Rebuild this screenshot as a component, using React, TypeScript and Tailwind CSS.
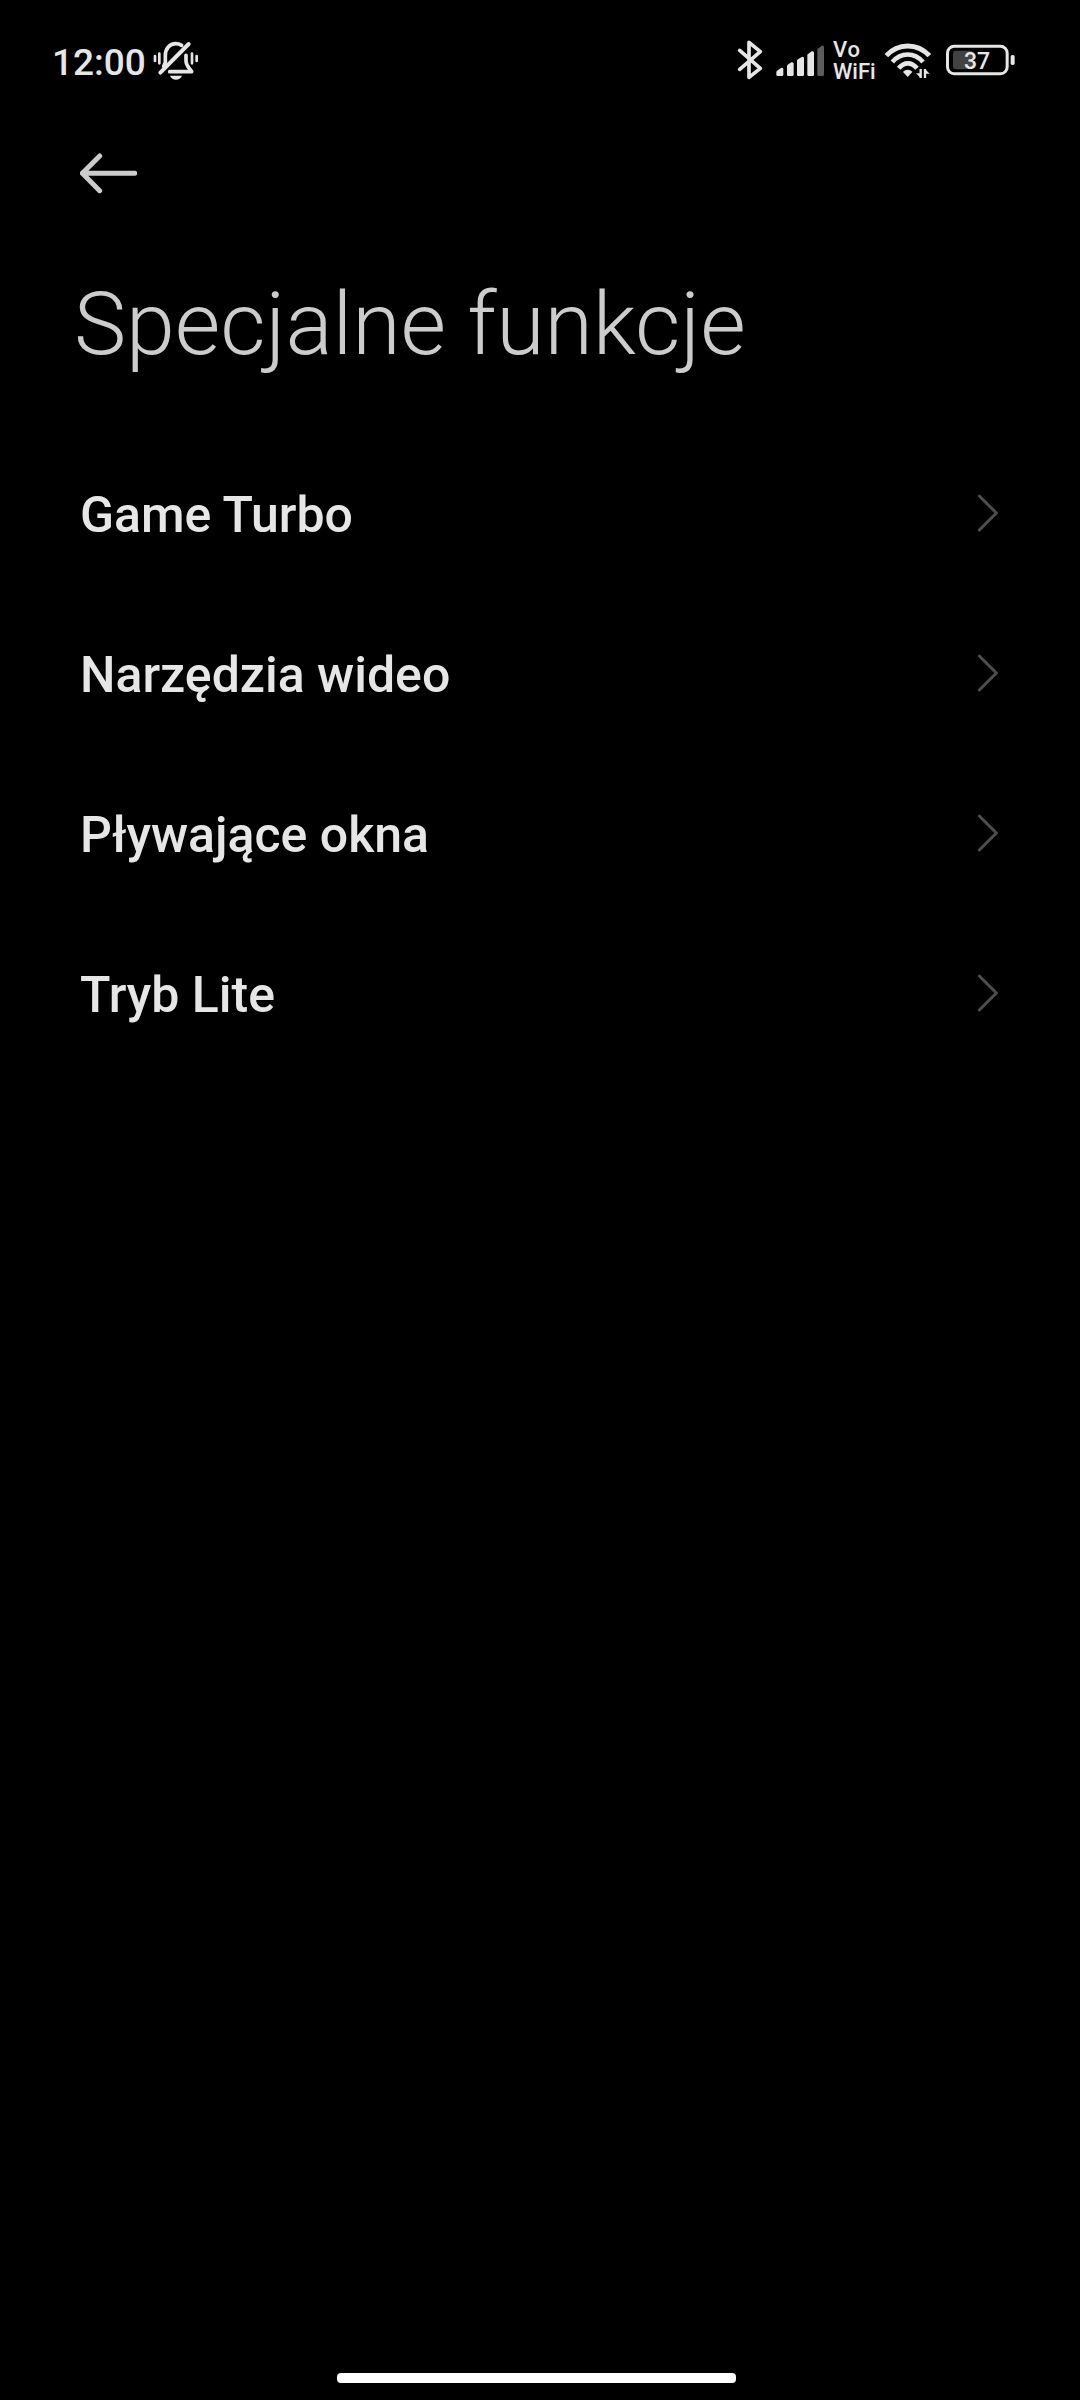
import React from 'react';

interface MenuItem {
  id: string;
  label: string;
}

const menuItems: MenuItem[] = [
  { id: 'game-turbo', label: 'Game Turbo' },
  { id: 'video-tools', label: 'Narzędzia wideo' },
  { id: 'floating-windows', label: 'Pływające okna' },
  { id: 'lite-mode', label: 'Tryb Lite' }
];

const MutedBellIcon = () => (
  <svg className="w-[46px] h-10" viewBox="339 30 138 120" fill="none" stroke="#e6e6e6" strokeLinecap="round">
    <path d="M361 128L446 42" strokeWidth="12" />
    <path d="M371 109L376 97V77C376 55 389 41 407 41C415 41 420 43 425 46" strokeWidth="11" />
    <path d="M438 76V92C438 106 446 112 455 125H389" strokeWidth="11" strokeLinejoin="round" />
    <path d="M390 137H426C420 153 396 153 390 137Z" fill="#e6e6e6" stroke="none" />
    <path d="M345 78V93M358 71V100M456 71V100M470 78V93" strokeWidth="8" />
  </svg>
);

const BluetoothIcon = () => (
  <svg className="w-[26px] h-10" viewBox="51 30 78 120" fill="none" stroke="#e6e6e6" strokeWidth="11" strokeLinecap="round" strokeLinejoin="round">
    <path d="M59 61L121 115L87 142V37L121 65L59 118" />
  </svg>
);

const SignalIcon = () => (
  <svg className="w-12 h-10" viewBox="168 30 144 120" fill="#e6e6e6">
    <path d="M171 122L183 114Q190 112 190 118V134Q190 138 186 138H173Q169 138 169 134V126Z" />
    <path d="M203 104L214 97Q221 95 221 101V134Q221 138 217 138H205Q201 138 201 134V107Z" />
    <path d="M234 88L245 81Q252 79 252 85V134Q252 138 248 138H235Q231 138 231 134V91Z" />
    <path d="M265 71L275 64Q282 62 282 68V134Q282 138 278 138H266Q262 138 262 134V74Z" />
    <path d="M295 55L306 47Q312 45 312 51V134Q312 138 308 138H296Q292 138 292 134V58Z" fill="#5c5c5c" />
  </svg>
);

const WifiIcon = () => (
  <svg className="w-[47px] h-10" viewBox="42 30 141 120" fill="none" stroke="#e6e6e6" strokeLinecap="butt">
    <path d="M49 77C84 38 142 38 178 77" strokeWidth="15" />
    <path d="M67 96C93 66 133 66 159 96" strokeWidth="14" />
    <path d="M86 115C103 95 124 95 141 115" strokeWidth="14" />
    <path d="M99 126C106 117 120 117 127 126L113 141Z" fill="#e6e6e6" stroke="none" />
    <path d="M152 117V144L138 130H152M165 144V117L179 131H165" fill="#e6e6e6" stroke="none" />
    <path d="M152 117V144M165 144V117" strokeWidth="7" />
  </svg>
);

const BatteryIcon = ({ level }: { level: number }) => (
  <div className="relative w-[69px] h-10">
    <svg className="w-[69px] h-10" viewBox="228 30 207 120">
      <rect x="232.500" y="49" width="179" height="82" rx="20" fill="none" stroke="#e6e6e6" strokeWidth="9" />
      <rect x="249" y="62" width="60" height="56" rx="9" fill="#424242" />
      <rect x="422" y="75" width="12" height="30" rx="5" fill="#e6e6e6" />
    </svg>
    <span className="absolute left-[18px] top-[9px] text-[23px] leading-[25px] font-medium">{level}</span>
  </div>
);

const BackIcon = () => (
  <svg className="w-[57px] h-[41px]" viewBox="60 39 171 123" fill="none" stroke="#cccccc" strokeLinecap="round" strokeLinejoin="round">
    <path d="M119 48L67 100L119 152M70 100H224" strokeWidth="15" />
  </svg>
);

const ChevronIcon = () => (
  <svg className="w-[22px] h-10" viewBox="51 39 66 120" fill="none" stroke="#4d4d4d" strokeWidth="9" strokeLinecap="round">
    <path d="M58 48L109 99L58 150" />
  </svg>
);

const StatusBar = () => (
  <header className="flex h-[120px] pt-10 pl-[52px] pr-[65px] text-[#e6e6e6]">
    <span className="w-[101px] h-10 pt-[2px] text-[37px] leading-[42px] font-medium whitespace-nowrap">12:00</span>
    <MutedBellIcon />
    <div className="flex ml-auto">
      <BluetoothIcon />
      <div className="ml-[13px]">
        <SignalIcon />
      </div>
      {/* Calling over Wi-Fi */}
      <div className="w-[51px] ml-[9px] -mt-px text-[22px] leading-[22px] font-medium">
        <div className="tracking-[0.8px]">Vo</div>
        <div>WiFi</div>
      </div>
      <WifiIcon />
      <div className="ml-[15px]">
        <BatteryIcon level={37} />
      </div>
    </div>
  </header>
);

const MenuRow = ({ label }: MenuItem) => (
  <button className="flex items-center justify-between w-full h-40 pl-20 pr-[81px] text-left">
    <span className="pt-[3px] text-[50px] leading-[60px] font-medium text-[#e6e6e6]">{label}</span>
    <ChevronIcon />
  </button>
);

export default function App() {
  return (
    <div className="flex flex-col w-[1080px] h-[2400px] bg-black font-['Roboto',sans-serif]">
      <StatusBar />
      <button className="pt-[33px] pl-20 self-start" aria-label="Wstecz">
        <BackIcon />
      </button>
      <h1 className="h-[239px] pt-[80px] pl-[74px] text-[88px] leading-[100px] font-light tracking-[-0.1px] text-[#cccccc]">
        Specjalne funkcje
      </h1>
      <nav>
        {menuItems.map(item => (
          <MenuRow key={item.id} {...item} />
        ))}
      </nav>
      <div className="w-[399px] h-2.5 mt-auto mb-[17px] ml-[337px] rounded-[4px] bg-white" />
    </div>
  );
}
